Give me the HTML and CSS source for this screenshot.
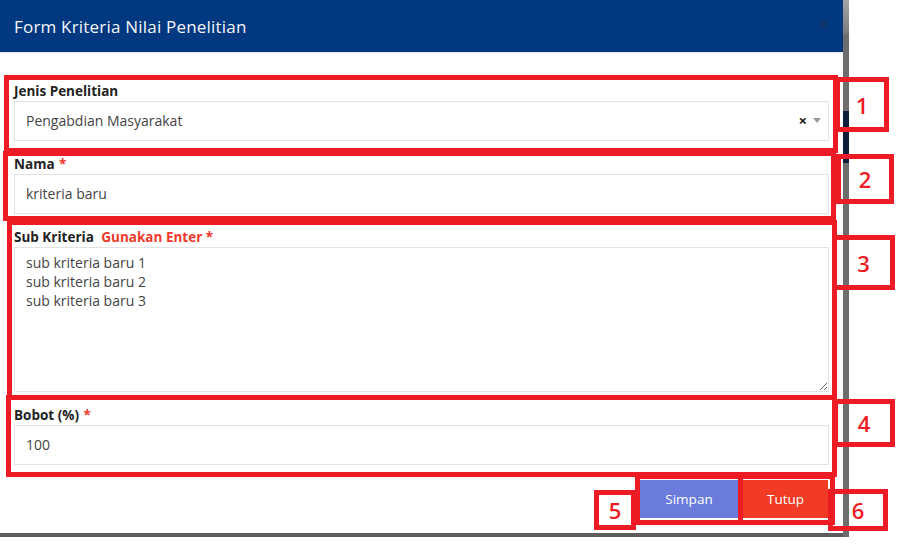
FILE: index.html
```html
<!DOCTYPE html>
<html lang="id">
<head>
<meta charset="utf-8">
<title>Form Kriteria Nilai Penelitian</title>
<link rel="stylesheet" href="styles.css">
</head>
<body>
<div class="screen">
  <div class="modal">
    <div class="modal-header">
      <h4 class="modal-title">Form Kriteria Nilai Penelitian</h4>
      <span class="close">&times;</span>
    </div>
    <div class="modal-body">
      <div class="form-group">
        <label class="label">Jenis Penelitian</label>
        <div class="control select">
          <span class="value">Pengabdian Masyarakat</span>
          <span class="clear">&times;</span>
          <span class="arrow"></span>
        </div>
      </div>
      <div class="form-group">
        <label class="label">Nama <span class="req">*</span></label>
        <div class="control"><span class="value">kriteria baru</span></div>
      </div>
      <div class="form-group">
        <label class="label">Sub Kriteria <span class="hint">Gunakan Enter *</span></label>
        <textarea class="textarea" readonly>sub kriteria baru 1
sub kriteria baru 2
sub kriteria baru 3</textarea>
      </div>
      <div class="form-group last">
        <label class="label">Bobot (%) <span class="req">*</span></label>
        <div class="control"><span class="value">100</span></div>
      </div>
    </div>
    <div class="modal-footer">
      <button class="btn btn-save">Simpan</button>
      <button class="btn btn-close">Tutup</button>
    </div>
  </div>
  <div class="scrollbar"></div>
</div>

<div class="annot a1"></div>
<div class="annot a2"></div>
<div class="annot a3"></div>
<div class="annot a4"></div>
<div class="annot a5"></div>
<div class="annot a6"></div>
<div class="tag t1">1</div>
<div class="tag t2">2</div>
<div class="tag t3">3</div>
<div class="tag t4">4</div>
<div class="tag t5">5</div>
<div class="tag t6">6</div>
</body>
</html>
```

FILE: styles.css
```css
* { box-sizing: border-box; }
html, body { margin: 0; padding: 0; background: #fff; }
body {
  width: 912px;
  height: 554px;
  overflow: hidden;
  position: relative;
  font-family: "Open Sans", "DejaVu Sans", sans-serif;
  color: #222;
}
.screen { display: flex; align-items: flex-start; }
.modal {
  width: 843px;
  height: 537px;
  background: #fff;
  border-bottom: 4px solid #5c5c5c;
  display: flex;
  flex-direction: column;
}
.scrollbar {
  width: 6px;
  height: 537px;
  background: linear-gradient(#a6a6a6 0, #7a7a7a 34px, #6d6d6d 35px, #6d6d6d 111px, #0d1f3d 111px, #0d1f3d 163px, #6d6d6d 163px, #6d6d6d 100%);
}
.modal-header {
  height: 53px;
  background: #02387f;
  border-bottom: 1px solid #e6e9ee;
  display: flex;
  align-items: center;
  justify-content: space-between;
  padding: 0 14px;
}
.modal-title {
  margin: 0;
  font-size: 17px;
  font-weight: 400;
  color: #f4f6fa;
  letter-spacing: 0.2px;
}
.close {
  color: #173a68;
  font-size: 19px;
  font-weight: 700;
  line-height: 1;
  margin-right: 1px;
  margin-top: -4px;
}
.modal-body { padding: 28px 14px 0; }
.form-group { margin-bottom: 13px; }
.form-group.last { margin-bottom: 0; }
.label {
  display: block;
  height: 20px;
  line-height: 20px;
  font-size: 13.5px;
  font-weight: 700;
  color: #222;
}
.req { color: #f0392a; margin-left: 1px; }
.hint { color: #f0392a; font-weight: 700; margin-left: 4px; }
.control {
  height: 40px;
  border: 1px solid #e3e3e3;
  display: flex;
  align-items: center;
  padding: 0 12px 2px 11px;
  font-size: 14px;
  color: #444;
}
.control .value { flex: 1; }
.select { padding-right: 7px; }
.select .clear {
  font-size: 15px;
  font-weight: 700;
  color: #222;
  margin-right: 6px;
}
.select .arrow {
  width: 0;
  height: 0;
  border-left: 4px solid transparent;
  border-right: 4px solid transparent;
  border-top: 5px solid #999;
}
.textarea {
  display: block;
  width: 100%;
  height: 145px;
  border: 1px solid #e3e3e3;
  padding: 5px 11px;
  font-family: inherit;
  font-size: 14px;
  line-height: 19px;
  color: #444;
  resize: vertical;
  outline: none;
}
.modal-footer {
  display: flex;
  justify-content: flex-end;
  gap: 5px;
  padding: 15px 15px 0;
}
.btn {
  height: 38px;
  border: 0;
  font-family: inherit;
  font-size: 13.5px;
  font-weight: 500;
  color: #fff;
  padding: 0;
}
.btn-save { width: 98px; background: #6a7bdc; }
.btn-close { width: 85px; background: #f23b24; }

.annot {
  position: absolute;
  border: 5px solid #ed1c24;
}
.a1 { left: 4px; top: 75px; width: 834px; height: 78px; }
.a2 { left: 3px; top: 151px; width: 833px; height: 70px; }
.a3 { left: 7px; top: 220px; width: 830px; height: 180px; }
.a4 { left: 6px; top: 395px; width: 831px; height: 82px; }
.a5 { left: 635px; top: 474px; width: 108px; height: 51px; }
.a6 { left: 738px; top: 474px; width: 97px; height: 51px; }
.tag {
  position: absolute;
  border: 5px solid #ed1c24;
  display: flex;
  align-items: center;
  justify-content: center;
  font-family: "Open Sans", Arial, sans-serif;
  font-size: 22px;
  font-weight: 600;
  color: #ed1c24;
}
.t1 { left: 835px; top: 77px; width: 54px; height: 55px; }
.t2 { left: 836px; top: 154px; width: 58px; height: 50px; }
.t3 { left: 832px; top: 235px; width: 63px; height: 55px; }
.t4 { left: 833px; top: 399px; width: 62px; height: 48px; }
.t5 { left: 594px; top: 490px; width: 42px; height: 40px; }
.t6 { left: 828px; top: 489px; width: 60px; height: 42px; }
```
